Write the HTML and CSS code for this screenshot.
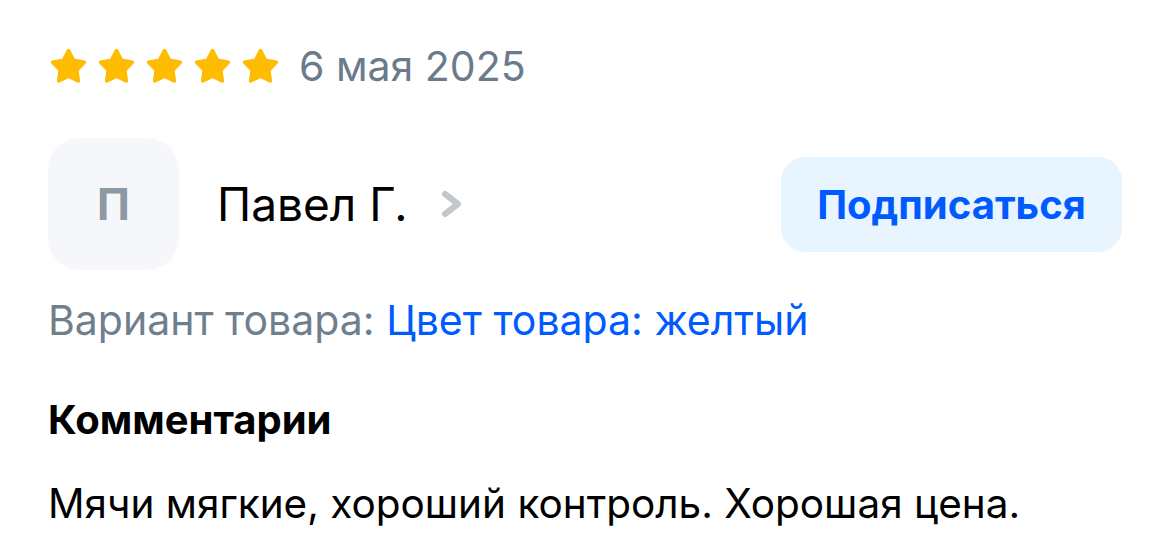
FILE: index.html
```html
<!DOCTYPE html>
<html lang="ru">
<head>
<meta charset="utf-8">
<link rel="stylesheet" href="styles.css">
</head>
<body>
<div class="review">
  <div class="rating-row">
    <div class="stars">
      <svg class="star" viewBox="0 0 24 24"><path d="M12 1.8L15.29 8.07 22.27 9.26 17.33 14.33 18.35 21.34 12 18.2 5.65 21.34 6.67 14.33 1.73 9.26 8.71 8.07z"/></svg>
      <svg class="star" viewBox="0 0 24 24"><path d="M12 1.8L15.29 8.07 22.27 9.26 17.33 14.33 18.35 21.34 12 18.2 5.65 21.34 6.67 14.33 1.73 9.26 8.71 8.07z"/></svg>
      <svg class="star" viewBox="0 0 24 24"><path d="M12 1.8L15.29 8.07 22.27 9.26 17.33 14.33 18.35 21.34 12 18.2 5.65 21.34 6.67 14.33 1.73 9.26 8.71 8.07z"/></svg>
      <svg class="star" viewBox="0 0 24 24"><path d="M12 1.8L15.29 8.07 22.27 9.26 17.33 14.33 18.35 21.34 12 18.2 5.65 21.34 6.67 14.33 1.73 9.26 8.71 8.07z"/></svg>
      <svg class="star" viewBox="0 0 24 24"><path d="M12 1.8L15.29 8.07 22.27 9.26 17.33 14.33 18.35 21.34 12 18.2 5.65 21.34 6.67 14.33 1.73 9.26 8.71 8.07z"/></svg>
    </div>
    <span class="date">6 мая 2025</span>
  </div>
  <div class="author-row">
    <div class="author">
      <div class="avatar">П</div>
      <span class="name">Павел Г.</span>
      <svg class="chevron" viewBox="0 0 24 30"><path d="M5 5l13 10-13 10"/></svg>
    </div>
    <div class="subscribe">Подписаться</div>
  </div>
  <div class="variant"><span class="variant-label">Вариант товара:</span> <span class="variant-value">Цвет товара: желтый</span></div>
  <div class="comments-title">Комментарии</div>
  <div class="comment">Мячи мягкие, хороший контроль. Хорошая цена.</div>
</div>
</body>
</html>
```

FILE: styles.css
```css
html, body {
  margin: 0;
  padding: 0;
  background: #ffffff;
}
body {
  font-family: "Inter", "Liberation Sans", sans-serif;
  color: #001a34;
}
.review {
  padding: 46px 48px 0 48px;
  width: 1074px;
}
.rating-row {
  display: flex;
  align-items: center;
  height: 40px;
}
.stars {
  display: flex;
  gap: 11px;
  margin-left: 2px;
}
.star {
  width: 37px;
  height: 37px;
  fill: #ffbb00;
  stroke: #ffbb00;
  stroke-width: 2.4;
  stroke-linejoin: round;
}
.date {
  margin-left: 20px;
  font-size: 41px;
  color: #6b7b8c;
  line-height: 40px;
}
.author-row {
  display: flex;
  align-items: center;
  justify-content: space-between;
  margin-top: 52px;
}
.author {
  display: flex;
  align-items: center;
}
.avatar {
  width: 131px;
  height: 132px;
  border-radius: 32px;
  background: #f5f7fa;
  display: flex;
  align-items: center;
  justify-content: center;
  font-size: 44px;
  font-weight: 700;
  color: #8c99a5;
}
.name {
  margin-left: 38px;
  font-size: 46px;
  color: #000000;
}
.chevron {
  margin-left: 32px;
  width: 24px;
  height: 30px;
  fill: none;
  stroke: #c0c7ce;
  stroke-width: 6;
  stroke-linecap: round;
  stroke-linejoin: round;
}
.subscribe {
  width: 341px;
  height: 95px;
  border-radius: 24px;
  background: #e8f4fe;
  color: #005bff;
  font-size: 40px;
  font-weight: 700;
  display: flex;
  align-items: center;
  justify-content: center;
}
.variant {
  margin-top: 24px;
  font-size: 41px;
  line-height: 52px;
}
.variant-label {
  color: #707f8d;
}
.variant-value {
  color: #005bff;
}
.comments-title {
  margin-top: 48px;
  font-size: 40px;
  font-weight: 700;
  color: #000000;
  line-height: 52px;
}
.comment {
  margin-top: 32px;
  font-size: 40.5px;
  color: #000000;
  line-height: 52px;
}
```
